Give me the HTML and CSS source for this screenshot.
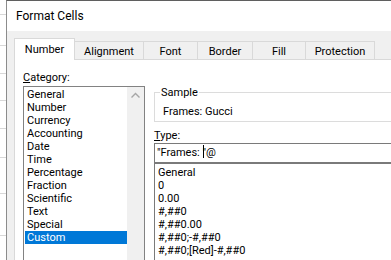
FILE: index.html
```html
<!DOCTYPE html>
<html>
<head>
<meta charset="utf-8">
<link rel="stylesheet" href="styles.css">
</head>
<body>
<div class="screen">
  <div class="sheet">
    <div class="g g1"></div>
    <div class="g g2"></div>
    <div class="g g3"></div>
    <div class="g g4"></div>
    <div class="g g5"></div>
    <div class="g g6"></div>
    <div class="g g7"></div>
    <div class="g g8"></div>
  </div>
  <div class="dialog">
    <div class="titlebar">Format Cells</div>
    <div class="body">
      <div class="tabs">
        <div class="tab sel t-number">Number</div>
        <div class="tab t-align">Alignment</div>
        <div class="tab t-font">Font</div>
        <div class="tab t-border">Border</div>
        <div class="tab t-fill">Fill</div>
        <div class="tab t-prot">Protection</div>
      </div>
      <div class="page">
        <div class="left">
          <div class="label"><span class="ul">C</span>ategory:</div>
          <div class="listbox">
            <div class="items">
              <div class="item">General</div>
              <div class="item">Number</div>
              <div class="item">Currency</div>
              <div class="item">Accounting</div>
              <div class="item">Date</div>
              <div class="item">Time</div>
              <div class="item">Percentage</div>
              <div class="item">Fraction</div>
              <div class="item">Scientific</div>
              <div class="item">Text</div>
              <div class="item">Special</div>
              <div class="item selected">Custom</div>
            </div>
            <div class="scroll">
              <svg class="arrow" width="17" height="17" viewBox="0 0 17 17"><polyline points="4.5,10.5 8.5,6.5 12.5,10.5" fill="none" stroke="#a6a6a6" stroke-width="1.4"/></svg>
            </div>
          </div>
        </div>
        <div class="right">
          <fieldset class="sample">
            <legend>Sample</legend>
            <div class="sample-text">Frames: Gucci</div>
          </fieldset>
          <div class="label type-label"><span class="ul">T</span>ype:</div>
          <div class="input">"Frames: <span class="caret"></span>"@</div>
          <div class="typelist">
            <div class="item">General</div>
            <div class="item">0</div>
            <div class="item">0.00</div>
            <div class="item">#,##0</div>
            <div class="item">#,##0.00</div>
            <div class="item">#,##0;-#,##0</div>
            <div class="item">#,##0;[Red]-#,##0</div>
          </div>
        </div>
      </div>
    </div>
  </div>
</div>
</body>
</html>
```

FILE: styles.css
```css
* { box-sizing: border-box; }
html, body {
  margin: 0;
  padding: 0;
}
body {
  width: 391px;
  height: 260px;
  overflow: hidden;
  background: #fff;
  font-family: Roboto, "Noto Sans", sans-serif;
  font-size: 11px;
  color: #000;
}
.screen {
  display: flex;
  height: 260px;
}
.sheet {
  width: 6px;
  flex: none;
  background: #fff;
}
.g { border-bottom: 1px solid #d8d8d8; }
.g1 { height: 15px; }
.g2 { height: 31px; }
.g3 { height: 28px; }
.g4 { height: 27px; }
.g5 { height: 28px; }
.g6 { height: 29px; }
.g7 { height: 36px; }
.g8 { height: 42px; }

.dialog {
  flex: 1;
  min-width: 0;
  display: flex;
  flex-direction: column;
  border-left: 1px solid #8c8c8c;
  border-top: 1px solid #5f5f5f;
}
.titlebar {
  height: 30px;
  flex: none;
  background: #fff;
  display: flex;
  align-items: center;
  padding-left: 9px;
  font-size: 12px;
}
.body {
  flex: 1;
  background: #f0f0f0;
  padding: 7px 0 0 7px;
  display: flex;
  flex-direction: column;
}
.tabs {
  display: flex;
  align-items: flex-end;
  height: 21px;
  flex: none;
}
.tab {
  height: 18px;
  border-top: 1px solid #d9d9d9;
  border-right: 1px solid #d9d9d9;
  display: flex;
  align-items: center;
  justify-content: center;
  padding-top: 1px;
  background: #f0f0f0;
}
.tab.sel {
  height: 22px;
  margin-bottom: -1px;
  background: #fff;
  border-left: 1px solid #d9d9d9;
  position: relative;
  z-index: 1;
  padding-top: 0;
}
.t-number { width: 61px; }
.t-align { width: 69px; }
.t-font { width: 54px; }
.t-border { width: 55px; }
.t-fill { width: 53px; }
.t-prot { width: 69px; }

.page {
  flex: 1;
  background: #fff;
  border-top: 1px solid #d9d9d9;
  border-left: 1px solid #d9d9d9;
  display: flex;
  gap: 9px;
  padding-left: 8px;
}
.left {
  width: 122px;
  flex: none;
  display: flex;
  flex-direction: column;
}
.label {
  height: 13px;
  line-height: 13px;
  margin-top: 11px;
  margin-bottom: 2px;
}
.ul { text-decoration: underline; }
.listbox {
  flex: 1;
  display: flex;
  border: 1px solid #828282;
  border-bottom: none;
}
.items {
  flex: 1;
  padding: 1px 0 0 1px;
}
.item {
  height: 13px;
  line-height: 13px;
  padding-left: 2px;
  white-space: nowrap;
}
.item.selected {
  background: #0078d7;
  color: #fff;
}
.scroll {
  width: 17px;
  flex: none;
  background: #f0f0f0;
}
.arrow { display: block; }

.right {
  flex: 1;
  min-width: 0;
  display: flex;
  flex-direction: column;
}
.sample {
  margin: 26px 0 0 0;
  padding: 0 0 0 5px;
  border: 1px solid #dcdcdc;
  border-right: none;
  min-width: 0;
}
.sample legend {
  padding: 0 1px;
  line-height: 13px;
  height: 13px;
}
.sample-text {
  height: 13px;
  line-height: 13px;
  margin-top: 6px;
  margin-bottom: 3px;
  padding-left: 3px;
}
.type-label {
  margin-top: 7px;
  margin-bottom: 1px;
}
.input {
  height: 20px;
  line-height: 18px;
  border: 1px solid #7a7a7a;
  border-right: none;
  padding-left: 2px;
  white-space: nowrap;
}
.caret {
  display: inline-block;
  width: 1px;
  height: 13px;
  background: #000;
  vertical-align: -2px;
  margin-right: -1px;
}
.typelist {
  flex: 1;
  border: 1px solid #7a7a7a;
  border-right: none;
  border-bottom: none;
  padding: 2px 0 0 1px;
}
```
